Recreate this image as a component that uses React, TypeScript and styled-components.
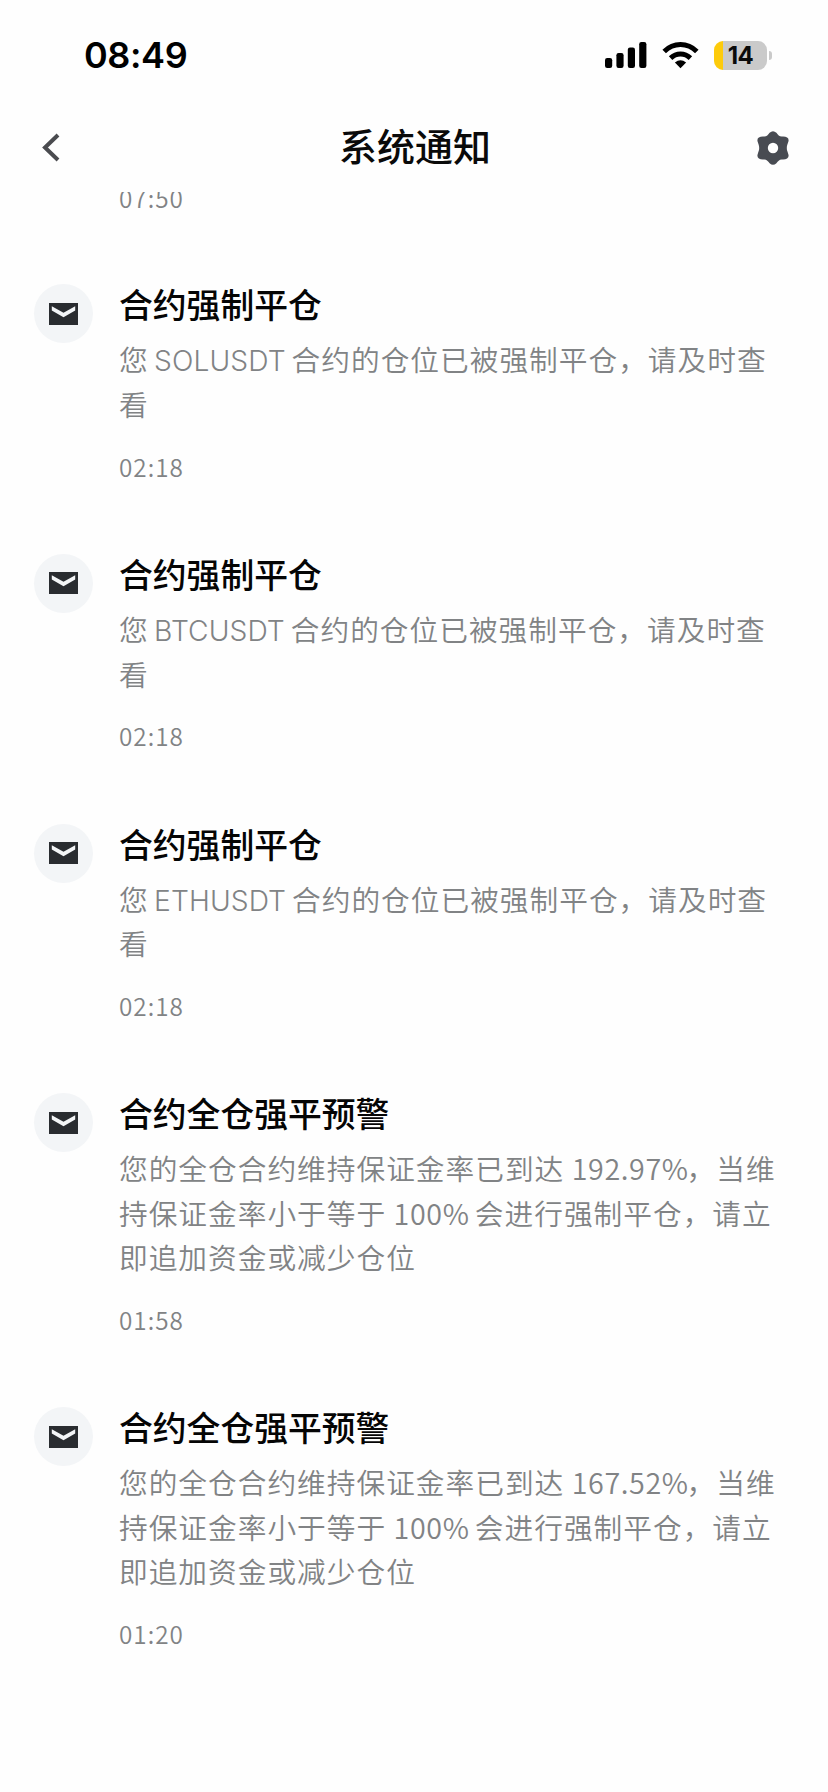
import React from "react";
import styled, { createGlobalStyle } from "styled-components";

const cjk = `"Noto Sans CJK SC", sans-serif`;

const GlobalStyle = createGlobalStyle`
  * { box-sizing: border-box; }
  body { margin: 0; background: #fefefe; font-family: ${cjk}; }
`;

const Screen = styled.div`
  width: 828px;
  height: 1792px;
  display: flex;
  flex-direction: column;
  overflow: hidden;
  background: #fefefe;
`;

const StatusBar = styled.header`
  height: 104px;
  flex: none;
  display: flex;
  align-items: flex-start;
  justify-content: space-between;
  padding: 32px 56px 0 84px;
`;

const Clock = styled.div`
  font: 600 36px/46px Inter, sans-serif;
  letter-spacing: -0.4px;
  color: #000;
`;

const StatusIcons = styled.div`
  display: flex;
  align-items: center;
  height: 46px;
`;

const SignalIcon = styled.svg`
  width: 42px;
  height: 28px;
  margin-right: 15px;
`;

const WifiIcon = styled.svg`
  width: 37px;
  height: 28px;
  margin-right: 15px;
`;

const Battery = styled.div`
  width: 53px;
  height: 29px;
  border-radius: 9px;
  background: linear-gradient(to right, #fdcb0b 9px, #cacaca 9px);
  font: 700 24px/30px Inter, sans-serif;
  letter-spacing: -0.5px;
  text-align: center;
  color: #0b0b0b;
`;

const BatteryTip = styled.div`
  width: 3px;
  height: 9px;
  margin-left: 2px;
  border-radius: 0 4px 4px 0;
  background: #cacaca;
`;

const NavBar = styled.nav`
  height: 88px;
  flex: none;
  display: grid;
  grid-template-columns: 100px 1fr 100px;
  align-items: center;
  padding: 0 38px 0 40px;
`;

const NavTitle = styled.h1`
  margin: 0;
  padding-bottom: 7px;
  font-size: 38px;
  line-height: 56px;
  font-weight: 500;
  text-align: center;
  color: #0a0a0a;
`;

const NavButton = styled.button<{ $end?: boolean }>`
  display: flex;
  justify-content: ${(p) => (p.$end ? "flex-end" : "flex-start")};
  padding: 0;
  border: 0;
  background: none;
`;

const List = styled.main`
  flex: 1;
  min-height: 0;
  overflow: hidden;
`;

const Item = styled.article`
  display: flex;
  gap: 26px;
  padding-left: 34px;
  margin-bottom: 72.4px;
`;

const Avatar = styled.div`
  width: 59px;
  height: 59px;
  flex: none;
  display: flex;
  align-items: center;
  justify-content: center;
  border-radius: 50%;
  background: #f3f5f7;
`;

const Content = styled.div`
  width: 680px;
`;

const Title = styled.h2`
  margin: -2px 0 11px;
  font-size: 33.8px;
  line-height: 44px;
  font-weight: 500;
  color: #050505;
`;

const Line = styled.div`
  height: 44.6px;
  font-size: 28.7px;
  letter-spacing: 1px;
  line-height: 44.6px;
  font-weight: 350;
  white-space: nowrap;
  color: #818385;
`;

const Ticker = styled.span`
  margin: 0 -1.5px 0 -2px;
  font-family: Inter, sans-serif;
  font-weight: 350;
  font-size: 28.2px;
  letter-spacing: 0.1px;
`;

const Figure = styled.span`
  margin-right: -2px;
  letter-spacing: 0.6px;
`;

const Time = styled.time<{ $cut?: boolean }>`
  display: block;
  margin: ${(p) => (p.$cut ? "-9px 0 71.4px 119px" : "25px 0 0")};
  font-size: 24.3px;
  line-height: 30px;
  letter-spacing: 1px;
  font-weight: 350;
  color: #818385;
`;

type Notice = { title: string; lines: React.ReactNode[]; time: string };

const liquidated = (symbol: string): Notice => ({
  title: "合约强制平仓",
  lines: [
    <>您 <Ticker>{symbol}</Ticker> 合约的仓位已被强制平仓，请及时查</>,
    "看",
  ],
  time: "02:18",
});

const warning = (rate: string, time: string): Notice => ({
  title: "合约全仓强平预警",
  lines: [
    <>您的全仓合约维持保证金率已到达 <Figure>{rate}</Figure>，当维</>,
    <>持保证金率小于等于 <Figure>100%</Figure> 会进行强制平仓，请立</>,
    "即追加资金或减少仓位",
  ],
  time,
});

const notices: Notice[] = [
  liquidated("SOLUSDT"),
  liquidated("BTCUSDT"),
  liquidated("ETHUSDT"),
  warning("192.97%", "01:58"),
  warning("167.52%", "01:20"),
];

const Envelope = () => (
  <svg width="29" height="22" viewBox="0 0 29 22">
    <path d="M0 0H29V22H0Z" fill="#292c30" />
    <path d="M2.8 3.2L14.5 9.8L26.2 3.2V7.6L14.5 14.2L2.8 7.6Z" fill="#f3f5f7" />
  </svg>
);

export default function App() {
  return (
    <>
      <GlobalStyle />
      <Screen>
        <StatusBar>
          <Clock>08:49</Clock>
          <StatusIcons>
            <SignalIcon viewBox="0 0 42 28">
              <rect x="0" y="17" width="7.2" height="10" rx="2.2" />
              <rect x="11.4" y="12" width="7.2" height="15" rx="2.2" />
              <rect x="22.8" y="6.5" width="7.2" height="20.5" rx="2.2" />
              <rect x="34.2" y="1" width="7.2" height="26" rx="2.2" />
            </SignalIcon>
            <WifiIcon viewBox="0 0 37 28" fill="none" stroke="#000" strokeWidth="5">
              <path d="M2.2 10.5C11.5 1.2 25.5 1.2 34.8 10.5" />
              <path d="M8.6 17.1C14.3 11.6 22.7 11.6 28.4 17.1" />
              <path d="M12.9 21.5Q18.5 16.8 24.1 21.5L18.5 27.2Z" fill="#000" stroke="none" />
            </WifiIcon>
            <Battery>14</Battery>
            <BatteryTip />
          </StatusIcons>
        </StatusBar>
        <NavBar>
          <NavButton aria-label="返回">
            <svg width="24" height="32" viewBox="0 0 24 32">
              <path d="M18 3L5 15.5L18 28" fill="none" stroke="#4a4b4f" strokeWidth="4" />
            </svg>
          </NavButton>
          <NavTitle>系统通知</NavTitle>
          <NavButton $end aria-label="设置">
            <svg width="34" height="36" viewBox="-17 -18 34 36">
              <path
                d="M-3.4 -15.2Q0 -18.2 3.4 -15.2C5.2 -13.2 6 -11.4 8.8 -11.4C13.5 -11.8 16.4 -10.2 15.4 -6.4C14.6 -3.6 13.8 -2.6 13.8 0C13.8 2.6 14.6 3.6 15.4 6.4C16.4 10.2 13.5 11.8 8.8 11.4C6 11.4 5.2 13.2 3.4 15.2Q0 18.2 -3.4 15.2C-5.2 13.2 -6 11.4 -8.8 11.4C-13.5 11.8 -16.4 10.2 -15.4 6.4C-14.6 3.6 -13.8 2.6 -13.8 0C-13.8 -2.6 -14.6 -3.6 -15.4 -6.4C-16.4 -10.2 -13.5 -11.8 -8.8 -11.4C-6 -11.4 -5.2 -13.2 -3.4 -15.2Z"
                fill="#484b52"
              />
              <circle r="5.2" fill="#fefefe" />
            </svg>
          </NavButton>
        </NavBar>
        <List>
          <Time $cut>07:50</Time>
          {notices.map((n, i) => (
            <Item key={i}>
              <Avatar><Envelope /></Avatar>
              <Content>
                <Title>{n.title}</Title>
                {n.lines.map((line, j) => <Line key={j}>{line}</Line>)}
                <Time>{n.time}</Time>
              </Content>
            </Item>
          ))}
        </List>
      </Screen>
    </>
  );
}
